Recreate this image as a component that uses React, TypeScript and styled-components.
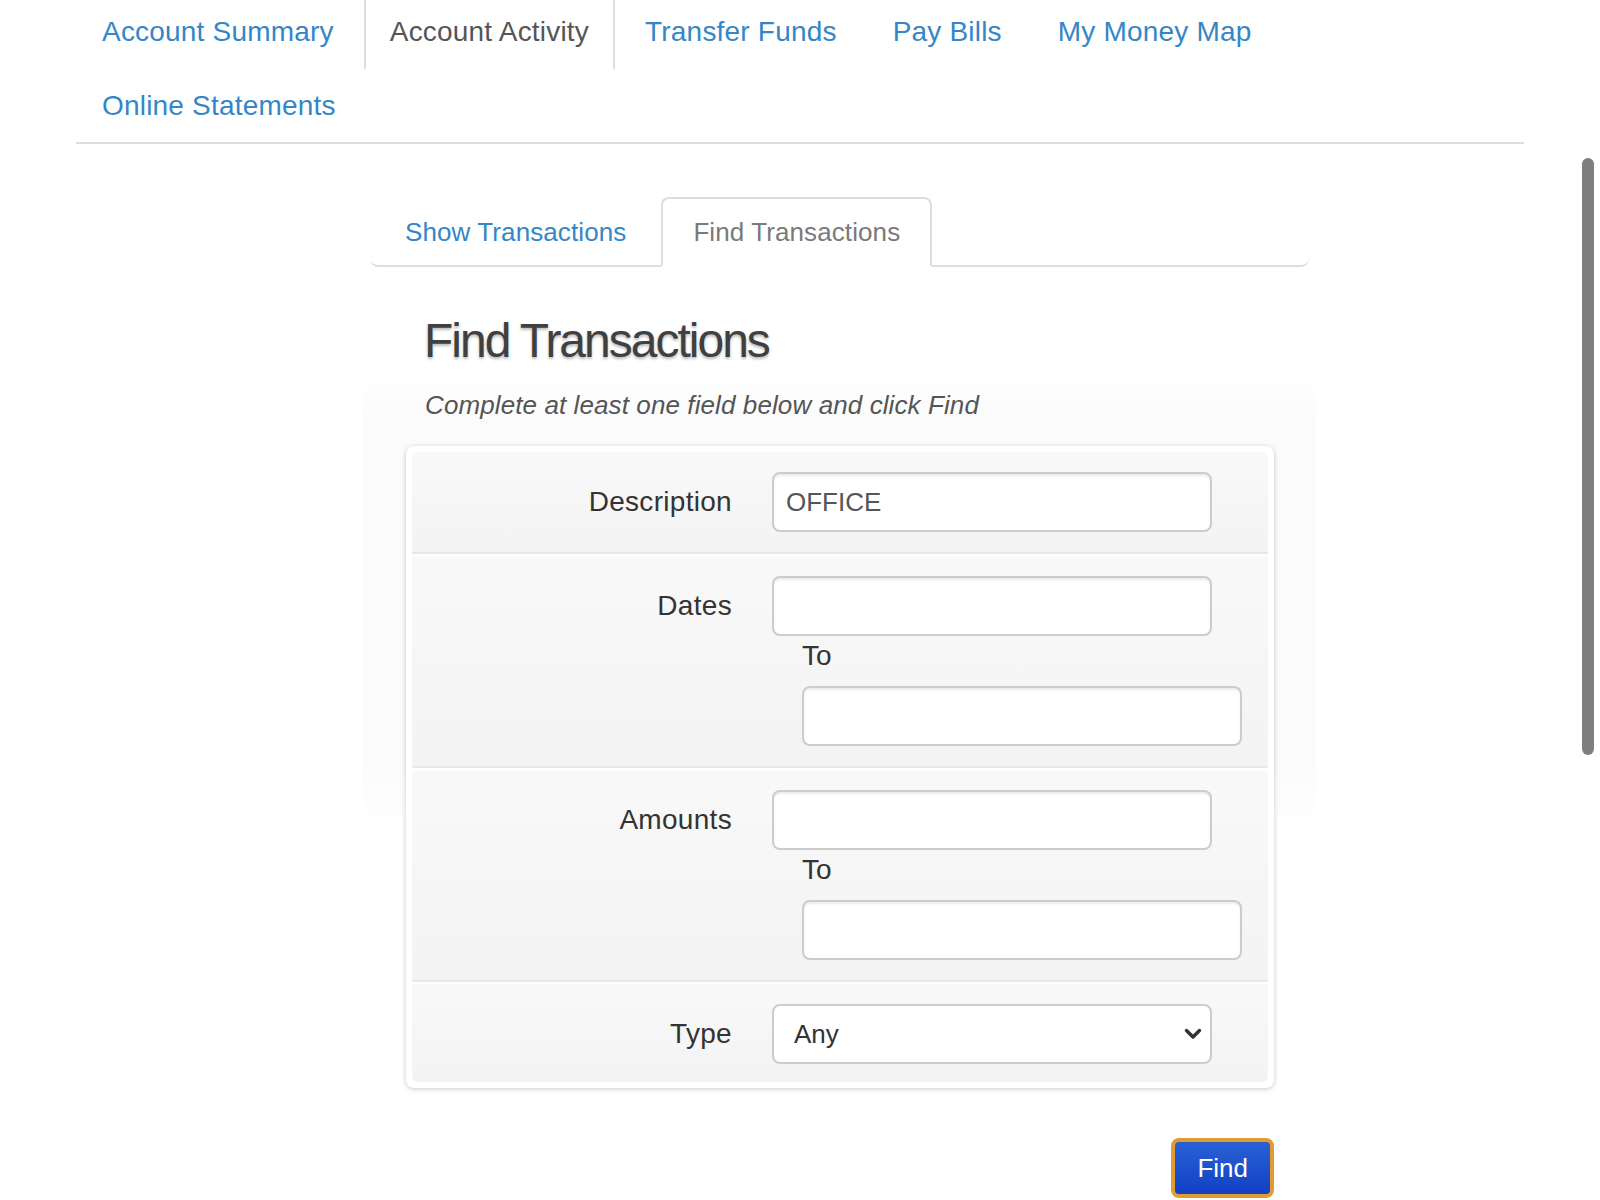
import React from "react";
import styled, { createGlobalStyle, css } from "styled-components";

const GlobalStyle = createGlobalStyle`
  html, body {
    margin: 0;
    padding: 0;
    background: #ffffff;
    overflow: hidden;
  }
  body {
    font-family: "Liberation Sans", Arial, Helvetica, sans-serif;
    color: #333333;
  }
  * { box-sizing: border-box; }
`;

const Page = styled.div`
  display: flow-root;
  width: 1448px;
  margin: 0 auto;
`;

const MainNav = styled.ul`
  display: flex;
  flex-wrap: wrap;
  list-style: none;
  margin: -6px 0 53px;
  padding: 0;
  border-bottom: 2px solid #dddddd;
`;

const MainNavItem = styled.li`
  margin: 0 4px -2px 0;
`;

const MainNavLink = styled.a<{ $active?: boolean }>`
  display: block;
  padding: 16px 24px;
  line-height: 40px;
  font-size: 28px;
  letter-spacing: 0.2px;
  text-decoration: none;
  border: 2px solid transparent;
  border-radius: 8px 8px 0 0;
  color: #3486c8;
  cursor: pointer;
  ${(p) =>
    p.$active &&
    css`
      color: #555555;
      background: #ffffff;
      border-color: #dddddd #dddddd transparent;
    `}
`;

const Content = styled.div`
  margin-left: 287px;
  width: 953px;
`;

const SubTabs = styled.ul`
  display: flex;
  list-style: none;
  margin: 0 0 0 7px;
  padding: 0 0 0 3px;
  width: 939px;
  border-bottom: 2px solid #dedede;
  border-radius: 0 0 8px 8px;
`;

const SubTab = styled.li<{ $active?: boolean }>`
  margin: 0 3px -2px 0;
  padding: 13px 30px 13px;
  line-height: 40px;
  font-size: 26px;
  letter-spacing: 0.1px;
  border: 2px solid transparent;
  border-radius: 8px 8px 0 0;
  color: #3486c8;
  cursor: pointer;
  ${(p) =>
    p.$active &&
    css`
      color: #7a7a7a;
      background: #ffffff;
      border-color: #dddddd #dddddd transparent;
    `}
`;

const TabPanel = styled.div`
  background: linear-gradient(
    to bottom,
    #ffffff 0px,
    #ffffff 110px,
    #fbfbfb 150px,
    #fbfbfb 500px,
    #ffffff 560px
  );
`;

const Heading = styled.h2`
  margin: 0;
  padding: 50px 0 20px 61px;
  font-size: 48px;
  line-height: 48px;
  font-weight: normal;
  letter-spacing: -2px;
  color: #404040;
  text-shadow: 0 2px 3px rgba(0, 0, 0, 0.28);
`;

const Hint = styled.p`
  margin: 0 0 21px;
  padding-left: 62px;
  font-size: 26px;
  line-height: 40px;
  letter-spacing: 0.1px;
  font-style: italic;
  color: #555555;
`;

const FormBox = styled.div`
  margin-left: 43px;
  width: 868px;
  padding: 6px;
  background: #ffffff;
  border-radius: 8px;
  box-shadow: 0 1px 5px rgba(0, 0, 0, 0.22);
`;

const FormPanel = styled.div`
  border-radius: 6px;
  overflow: hidden;
`;

const FieldRow = styled.div<{ $first?: boolean; $last?: boolean }>`
  display: grid;
  grid-template-columns: 320px 1fr;
  column-gap: 40px;
  padding: 20px 0 ${(p) => (p.$last ? "18px" : "20px")};
  background: linear-gradient(to bottom, #f9f9f9, #f3f3f3);
  border-top: ${(p) => (p.$first ? "none" : "2px solid #ffffff")};
  border-bottom: ${(p) => (p.$last ? "none" : "2px solid #e8e8e8")};
`;

const FieldLabel = styled.label`
  text-align: right;
  padding-top: 10px;
  font-size: 28px;
  line-height: 40px;
  letter-spacing: 0.3px;
  color: #333333;
`;

const Controls = styled.div`
  display: flex;
  flex-direction: column;
  align-items: flex-start;
`;

const TextInput = styled.input`
  width: 440px;
  height: 60px;
  padding: 8px 12px;
  font-family: inherit;
  font-size: 26px;
  color: #555555;
  background: #ffffff;
  border: 2px solid #cccccc;
  border-radius: 8px;
  box-shadow: inset 0 2px 2px rgba(0, 0, 0, 0.075);
  outline: none;
`;

const RangeEnd = styled.div`
  margin-left: 30px;
  display: flex;
  flex-direction: column;
  align-items: flex-start;
`;

const ToLabel = styled.label`
  display: block;
  margin-bottom: 10px;
  font-size: 28px;
  line-height: 40px;
  color: #333333;
`;

const SelectWrap = styled.div`
  position: relative;
  width: 440px;
`;

const Select = styled.select`
  appearance: none;
  -webkit-appearance: none;
  width: 100%;
  height: 60px;
  padding: 0 20px;
  font-family: inherit;
  font-size: 26px;
  color: #333333;
  background: #ffffff;
  border: 2px solid #cccccc;
  border-radius: 8px;
  outline: none;
`;

const Chevron = styled.svg`
  position: absolute;
  right: 10px;
  top: 50%;
  transform: translateY(-50%);
  pointer-events: none;
`;

const Actions = styled.div`
  display: flex;
  justify-content: flex-end;
  margin: 50px 0 0 43px;
  width: 868px;
`;

const FindButton = styled.button`
  height: 60px;
  padding: 0 22px;
  font-family: inherit;
  font-size: 26px;
  line-height: 40px;
  color: #ffffff;
  background: linear-gradient(to bottom, #2b60d4, #1141c4);
  border: 4px solid #e09b32;
  border-radius: 8px;
  cursor: pointer;
`;

const Scrollbar = styled.div`
  position: fixed;
  top: 158px;
  right: 6px;
  width: 12px;
  height: 597px;
  border-radius: 6px;
  background: #7f7f7f;
`;

const navItems = [
  "Account Summary",
  "Account Activity",
  "Transfer Funds",
  "Pay Bills",
  "My Money Map",
  "Online Statements",
];

export default function App() {
  return (
    <>
      <GlobalStyle />
      <Page>
        <MainNav>
          {navItems.map((label, i) => (
            <MainNavItem key={label}>
              <MainNavLink $active={i === 1}>{label}</MainNavLink>
            </MainNavItem>
          ))}
        </MainNav>
        <Content>
          <SubTabs>
            <SubTab>Show Transactions</SubTab>
            <SubTab $active>Find Transactions</SubTab>
          </SubTabs>
          <TabPanel>
            <Heading>Find Transactions</Heading>
            <Hint>Complete at least one field below and click Find</Hint>
            <FormBox>
              <FormPanel>
                <FieldRow $first>
                  <FieldLabel>Description</FieldLabel>
                  <Controls>
                    <TextInput type="text" defaultValue="OFFICE" />
                  </Controls>
                </FieldRow>
                <FieldRow>
                  <FieldLabel>Dates</FieldLabel>
                  <Controls>
                    <TextInput type="text" />
                    <RangeEnd>
                      <ToLabel>To</ToLabel>
                      <TextInput type="text" />
                    </RangeEnd>
                  </Controls>
                </FieldRow>
                <FieldRow>
                  <FieldLabel>Amounts</FieldLabel>
                  <Controls>
                    <TextInput type="text" />
                    <RangeEnd>
                      <ToLabel>To</ToLabel>
                      <TextInput type="text" />
                    </RangeEnd>
                  </Controls>
                </FieldRow>
                <FieldRow $last>
                  <FieldLabel>Type</FieldLabel>
                  <Controls>
                    <SelectWrap>
                      <Select defaultValue="Any">
                        <option>Any</option>
                        <option>Deposit</option>
                        <option>Withdrawal</option>
                      </Select>
                      <Chevron width="18" height="12" viewBox="0 0 18 12">
                        <path
                          d="M2.5 2.5 L9 9 L15.5 2.5"
                          fill="none"
                          stroke="#333333"
                          strokeWidth="3.5"
                          strokeLinecap="round"
                          strokeLinejoin="round"
                        />
                      </Chevron>
                    </SelectWrap>
                  </Controls>
                </FieldRow>
              </FormPanel>
            </FormBox>
            <Actions>
              <FindButton type="button">Find</FindButton>
            </Actions>
          </TabPanel>
        </Content>
      </Page>
      <Scrollbar />
    </>
  );
}
